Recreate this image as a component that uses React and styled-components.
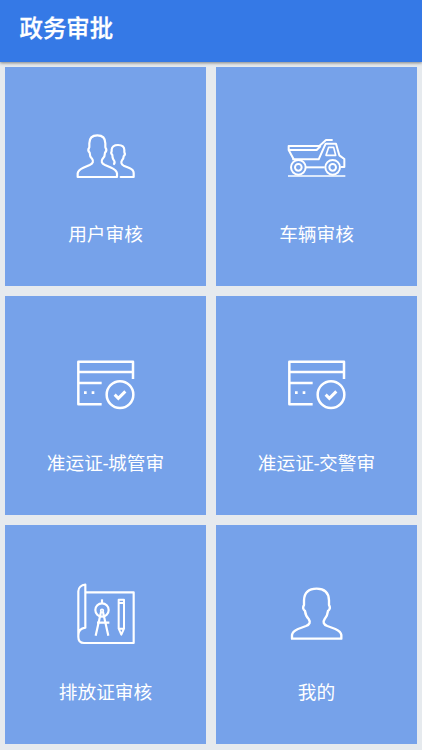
import React from 'react';
import styled, { createGlobalStyle } from 'styled-components';

const GlobalStyle = createGlobalStyle`
  * {
    box-sizing: border-box;
  }
  body {
    margin: 0;
    background-color: #e6eaee;
    font-family: Roboto, 'Noto Sans CJK SC', sans-serif;
  }
`;

const Page = styled.div`
  display: flex;
  flex-direction: column;
  height: 750px;
  overflow: hidden;
  background-color: #e6eaee;
`;

const Header = styled.header`
  flex: none;
  height: 62px;
  padding: 12px 0 0 19.5px;
  background-color: #3579e6;
  box-shadow: 0 1px 3px rgba(0, 0, 0, 0.45);
`;

const Title = styled.h1`
  margin: 0;
  font-size: 23.4px;
  line-height: 34px;
  font-weight: 500;
  color: #fff;
  -webkit-text-stroke: 0.3px #fff;
`;

const Grid = styled.main`
  display: grid;
  grid-template-columns: 1fr 1fr;
  grid-auto-rows: 219px;
  gap: 10px;
  padding: 5px;
`;

const Tile = styled.div`
  display: flex;
  flex-direction: column;
  align-items: center;
  padding-top: 50px;
  background-color: #76a2ea;
`;

const Icon = styled.svg`
  flex: none;
  width: 80px;
  height: 75px;
  margin-left: 1px;
  fill: none;
  stroke: #fff;
  stroke-width: ${({ $stroke }) => $stroke || 6.5};
  stroke-linejoin: round;
`;

const Label = styled.span`
  margin-top: 28px;
  font-size: 18.7px;
  line-height: 30px;
  color: #fff;
  white-space: nowrap;
`;

const UsersIcon = () => (
  <Icon viewBox="0 -24 240 225" $stroke={6.5}>
    <path d="M35 156V145C36 136 43 132 52 128L71 120C82 115 83 108 78 101C73 96 71 90 71 83C66 78 66 72 70 67V55C70 38 79 31 94 31C109 31 118 38 118 55V67C122 72 122 78 117 83C117 90 115 96 110 101C105 108 106 115 117 120L136 128C145 132 152 136 153 145V156Z" />
    <path
      d="M144 117C148 112 146 108 142 103C139 98 139 94 139 90C135 86 135 82 137 79V74C138 64 145 60 156 60C168 60 175 64 175 75V82C178 86 177 90 173 94C173 99 171 103 168 106C164 112 166 118 173 122L190 129C199 133 203 138 203 144V156H164"
      strokeLinecap="round"
    />
  </Icon>
);

const TruckIcon = () => (
  <Icon viewBox="0 -24 240 225" $stroke={6}>
    <path d="M167 45H147L127 63H35V75L50 103" />
    <path d="M36 75H119L131 63" />
    <path d="M46 103H125L146 56H177L187 91L202 102V126H192" />
    <path d="M155 67H170L176 91H147Z" strokeWidth="5" />
    <path d="M87 127H143" />
    <circle cx="64" cy="127" r="22" />
    <circle cx="64" cy="127" r="10" />
    <circle cx="167" cy="127" r="22" />
    <circle cx="167" cy="127" r="10" />
    <path d="M33 153H205" strokeWidth="5" />
  </Icon>
);

const PermitIcon = () => (
  <Icon viewBox="0 -12 240 225" $stroke={7.5}>
    <path d="M107 163H37V35H201V87" />
    <path d="M37 66H201M37 99H107" />
    <circle cx="162" cy="134" r="40" />
    <path d="M146 134L157 145L178 124" strokeWidth="9" strokeLinejoin="miter" />
    <path d="M54 128H62M77 128H85" strokeWidth="8" />
  </Icon>
);

const BlueprintIcon = () => (
  <Icon viewBox="0 0 240 225" $stroke={6.5}>
    <path d="M58 52H203V204H54C43 204 37 197 37 186V49C37 38 46 30 58 29V158C45 160 37 168 37 181" />
    <circle cx="108" cy="105" r="20" />
    <path d="M108 73V86" />
    <path d="M105 111L89 182M111 111L127 182M93 143H130" />
    <circle cx="108" cy="107" r="4" strokeWidth="5" />
    <path d="M158 74H174V161L166 179L158 161ZM158 84H174M158 161H174" strokeWidth="6" />
  </Icon>
);

const PersonIcon = () => (
  <Icon viewBox="0 0 240 225" $stroke={7}>
    <path d="M45 191V180C46 171 54 166 63 162L87 153C99 148 101 141 95 132C87 124 85 117 84 108C78 103 77 96 81 90V76C82 52 95 41 119 41C143 41 155 52 156 76V90C160 96 159 103 153 108C152 117 150 124 143 132C137 141 139 148 151 153L175 162C184 166 192 171 193 180V191Z" />
  </Icon>
);

const items = [
  { label: '用户审核', icon: UsersIcon },
  { label: '车辆审核', icon: TruckIcon },
  { label: '准运证-城管审', icon: PermitIcon },
  { label: '准运证-交警审', icon: PermitIcon },
  { label: '排放证审核', icon: BlueprintIcon },
  { label: '我的', icon: PersonIcon },
];

const App = () => {
  return (
    <Page>
      <GlobalStyle />
      <Header>
        <Title>政务审批</Title>
      </Header>
      <Grid>
        {items.map(({ label, icon: ItemIcon }) => (
          <Tile key={label}>
            <ItemIcon />
            <Label>{label}</Label>
          </Tile>
        ))}
      </Grid>
    </Page>
  );
};

export default App;
